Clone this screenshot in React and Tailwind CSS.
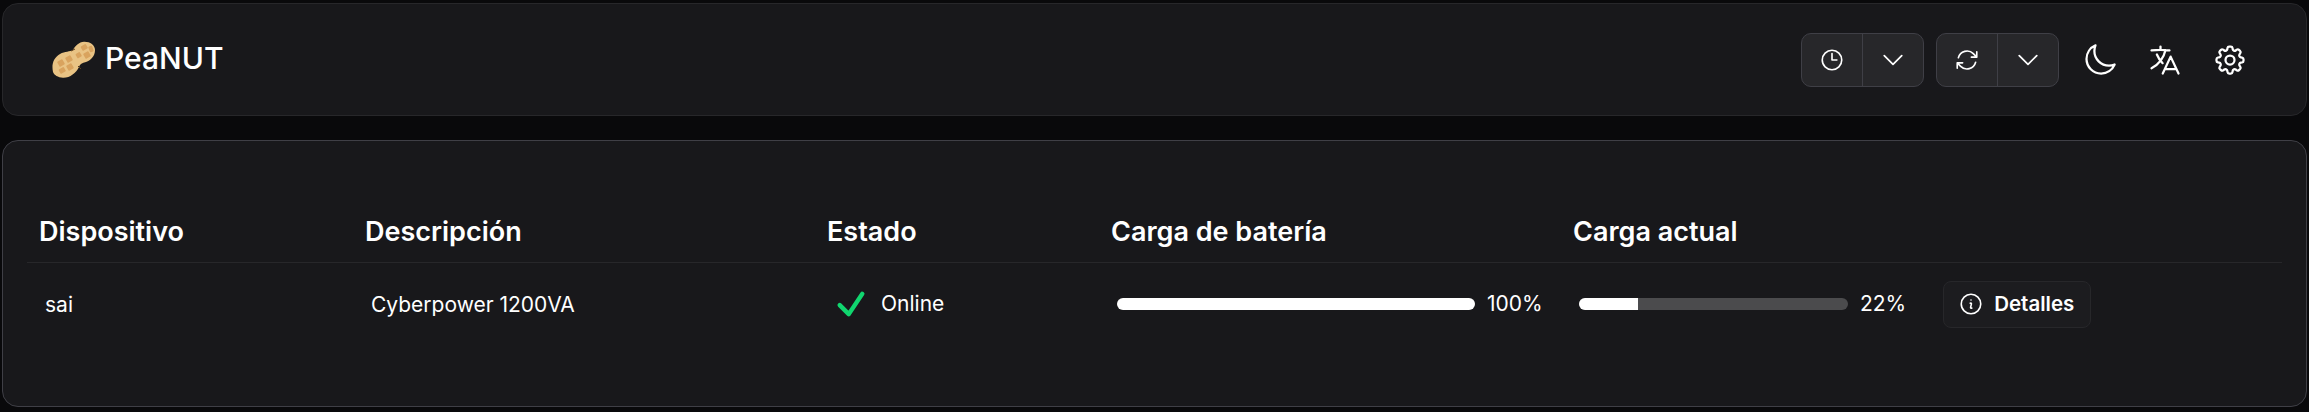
import {
  HiOutlineClock,
  HiOutlineArrowPath,
  HiOutlineChevronDown,
  HiOutlineMoon,
  HiOutlineLanguage,
  HiOutlineCog8Tooth,
  HiOutlineCheck,
  HiOutlineInformationCircle,
} from 'react-icons/hi2';

function Peanut() {
  return (
    <svg width="43" height="37" viewBox="0 0 43 37" className="shrink-0">
      <path
        d="M1 31C-.5 24 1 17 8 13c5-3 10-2 13-4 2-4 6-8 11-8.300C38 .5 43 4 43 9c0 6-4 10-9 12-4 1-6 2-7 5-3 6-9 11-16 10.800C6 36.500 2 34 1 31z"
        fill="#e9c384"
      />
      <g fill="#d9a35e">
        <rect x="6" y="19" width="6" height="6" rx="1" transform="rotate(-30 9 22)" />
        <rect x="14" y="15" width="6" height="6" rx="1" transform="rotate(-30 17 18)" />
        <rect x="7" y="27" width="6" height="5" rx="1" transform="rotate(-30 10 29)" />
        <rect x="15" y="23" width="6" height="6" rx="1" transform="rotate(-30 18 26)" />
        <rect x="24" y="12" width="5" height="5" rx="1" transform="rotate(-30 26 14)" />
        <rect x="29" y="4" width="6" height="5" rx="1" transform="rotate(-30 32 6)" />
        <rect x="32" y="11" width="6" height="6" rx="1" transform="rotate(-30 35 14)" />
        <rect x="37" y="5" width="4" height="6" rx="1" transform="rotate(-20 39 8)" />
      </g>
      <path d="M19 10l4-2M26 25l3 3" stroke="#5a3d1c" strokeWidth="1" fill="none" />
    </svg>
  );
}

function SplitButton({ icon }) {
  return (
    <div className="flex h-[54px] w-[123px] rounded-[10px] border border-[#3f3f46] bg-[#27272a] text-white">
      <div className="flex w-[61px] items-center justify-center border-r border-[#3f3f46]">{icon}</div>
      <div className="flex flex-1 items-center justify-center">
        <HiOutlineChevronDown size={28} />
      </div>
    </div>
  );
}

function Bar({ value, width }) {
  return (
    <div className={`h-3 overflow-hidden rounded-md bg-[#4b4b4d] ${width}`}>
      <div className="h-full bg-white" style={{ width: `${value}%` }} />
    </div>
  );
}

export default function App() {
  return (
    <div className="min-h-[412px] bg-[#09090b] px-[2px] pt-[3px] font-['Inter',sans-serif] text-white">
      {/* cabecera */}
      <div className="flex h-[113px] items-center justify-between rounded-2xl border border-[#27272a] bg-[#18181b] pl-[49px] pr-[58px]">
        <div className="flex items-center gap-[10px]">
          <Peanut />
          <span className="pb-1 text-[30px] font-medium leading-9">PeaNUT</span>
        </div>
        <div className="flex items-center">
          <SplitButton icon={<HiOutlineClock size={26} />} />
          <div className="ml-3">
            <SplitButton icon={<HiOutlineArrowPath size={26} />} />
          </div>
          <div className="ml-[23px] flex items-center gap-[29px]">
            <HiOutlineMoon size={36} />
            <HiOutlineLanguage size={36} />
            <HiOutlineCog8Tooth size={36} />
          </div>
        </div>
      </div>

      {/* tabla */}
      <div className="mt-[24px] h-[267px] rounded-2xl border border-[#3f3f46] bg-[#18181b] px-[24px] pt-[61px]">
        <table className="w-full table-fixed border-collapse">
          <colgroup>
            <col className="w-[326px]" />
            <col className="w-[462px]" />
            <col className="w-[284px]" />
            <col className="w-[462px]" />
            <col />
          </colgroup>
          <thead>
            <tr className="h-[60px] border-b border-[#27272a] text-left text-[27px]">
              <th className="pl-[12px] font-semibold">Dispositivo</th>
              <th className="pl-[12px] font-semibold">Descripción</th>
              <th className="pl-[12px] font-semibold">Estado</th>
              <th className="pl-[12px] font-semibold">Carga de batería</th>
              <th className="pl-[12px] font-semibold">Carga actual</th>
            </tr>
          </thead>
          <tbody className="text-[21px]">
            <tr>
              <td className="pl-[18px] pt-[18px] align-top leading-[47px]">sai</td>
              <td className="pl-[18px] pt-[18px] align-top leading-[47px]">Cyberpower 1200VA</td>
              <td className="pl-[18px] pt-[18px] align-top">
                <div className="flex h-[47px] items-center gap-3">
                  <HiOutlineCheck size={36} strokeWidth={3} className="text-[#10d66f]" />
                  <span>Online</span>
                </div>
              </td>
              <td className="pl-[18px] pt-[18px] align-top">
                <div className="flex h-[47px] items-center gap-3">
                  <Bar value={100} width="w-[358px]" />
                  <span>100%</span>
                </div>
              </td>
              <td className="pl-[18px] pt-[18px] align-top">
                <div className="flex h-[47px] items-center">
                  <Bar value={22} width="w-[269px]" />
                  <span className="ml-3">22%</span>
                  <button className="ml-[37px] flex h-[47px] w-[148px] items-center justify-center gap-[10px] rounded-lg border border-[#27272a] bg-[#1c1c1f] pr-[2px] text-[20.5px] font-semibold">
                    <HiOutlineInformationCircle size={26} />
                    Detalles
                  </button>
                </div>
              </td>
            </tr>
          </tbody>
        </table>
      </div>
    </div>
  );
}
